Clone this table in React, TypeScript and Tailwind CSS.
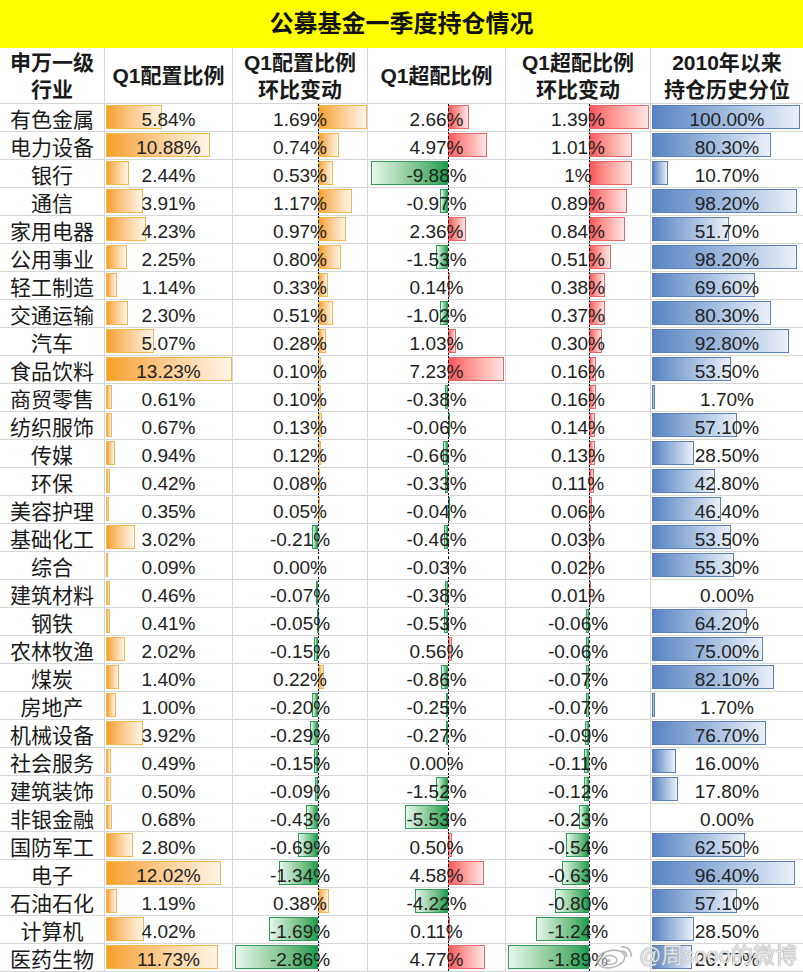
import React from 'react';

// 公募基金一季度持仓情况 — 表格 + 数据条

type Row = [string, string, string, string, string, string];

const ROWS: Row[] = [
  ['有色金属', '5.84%', '1.69%', '2.66%', '1.39%', '100.00%'],
  ['电力设备', '10.88%', '0.74%', '4.97%', '1.01%', '80.30%'],
  ['银行', '2.44%', '0.53%', '-9.88%', '1%', '10.70%'],
  ['通信', '3.91%', '1.17%', '-0.97%', '0.89%', '98.20%'],
  ['家用电器', '4.23%', '0.97%', '2.36%', '0.84%', '51.70%'],
  ['公用事业', '2.25%', '0.80%', '-1.53%', '0.51%', '98.20%'],
  ['轻工制造', '1.14%', '0.33%', '0.14%', '0.38%', '69.60%'],
  ['交通运输', '2.30%', '0.51%', '-1.02%', '0.37%', '80.30%'],
  ['汽车', '5.07%', '0.28%', '1.03%', '0.30%', '92.80%'],
  ['食品饮料', '13.23%', '0.10%', '7.23%', '0.16%', '53.50%'],
  ['商贸零售', '0.61%', '0.10%', '-0.38%', '0.16%', '1.70%'],
  ['纺织服饰', '0.67%', '0.13%', '-0.06%', '0.14%', '57.10%'],
  ['传媒', '0.94%', '0.12%', '-0.66%', '0.13%', '28.50%'],
  ['环保', '0.42%', '0.08%', '-0.33%', '0.11%', '42.80%'],
  ['美容护理', '0.35%', '0.05%', '-0.04%', '0.06%', '46.40%'],
  ['基础化工', '3.02%', '-0.21%', '-0.46%', '0.03%', '53.50%'],
  ['综合', '0.09%', '0.00%', '-0.03%', '0.02%', '55.30%'],
  ['建筑材料', '0.46%', '-0.07%', '-0.38%', '0.01%', '0.00%'],
  ['钢铁', '0.41%', '-0.05%', '-0.53%', '-0.06%', '64.20%'],
  ['农林牧渔', '2.02%', '-0.15%', '0.56%', '-0.06%', '75.00%'],
  ['煤炭', '1.40%', '0.22%', '-0.86%', '-0.07%', '82.10%'],
  ['房地产', '1.00%', '-0.20%', '-0.25%', '-0.07%', '1.70%'],
  ['机械设备', '3.92%', '-0.29%', '-0.27%', '-0.09%', '76.70%'],
  ['社会服务', '0.49%', '-0.15%', '0.00%', '-0.11%', '16.00%'],
  ['建筑装饰', '0.50%', '-0.09%', '-1.52%', '-0.12%', '17.80%'],
  ['非银金融', '0.68%', '-0.43%', '-5.53%', '-0.23%', '0.00%'],
  ['国防军工', '2.80%', '-0.69%', '0.50%', '-0.54%', '62.50%'],
  ['电子', '12.02%', '-1.34%', '4.58%', '-0.63%', '96.40%'],
  ['石油石化', '1.19%', '0.38%', '-4.22%', '-0.80%', '57.10%'],
  ['计算机', '4.02%', '-1.69%', '0.11%', '-1.24%', '28.50%'],
  ['医药生物', '11.73%', '-2.86%', '4.77%', '-1.89%', '26.70%'],
];

const FONT = "font-['Liberation_Sans','Noto_Sans_CJK_SC',sans-serif]";

type Pos = 'orange' | 'red' | 'blue';

function barCls(pos: Pos, neg: boolean) {
  if (neg) return 'border border-[#2f9a5c] bg-linear-to-l from-[#11a04e] to-[#e6f6ec]';
  if (pos === 'orange') return 'border border-[#f4b650] bg-linear-to-r from-[#f5a11c] to-[#fff5e6]';
  if (pos === 'blue') return 'border border-[#5d7fb6] bg-linear-to-r from-[#5784c3] to-[#ebf0f7]';
  return 'border border-[#e7686b] bg-linear-to-r from-[#f7565a] to-[#ffe6e6]';
}

function BarCell({
  value,
  pos,
  axis,
  scale,
  dashed,
  last,
}: {
  value: string;
  pos: Pos;
  axis: number;
  scale: number;
  dashed?: boolean;
  last?: boolean;
}) {
  const v = parseFloat(value);
  const w = Math.abs(v) * scale;
  const neg = v < 0;
  const left = neg ? axis - w : axis;
  return (
    <div
      className={`relative h-7 border-b border-[#d6d6d6] ${last ? '' : 'border-r'} overflow-hidden`}
    >
      {w > 0.3 ? (
        <div
          className={`absolute top-px h-6 ${barCls(pos, neg)}`}
          style={{ left, width: Math.max(w, 2) }}
        />
      ) : null}
      {dashed ? (
        <div
          className="absolute -top-px bottom-[-1px] border-l border-dashed border-black"
          style={{ left: axis }}
        />
      ) : null}
      <div className="relative flex h-full items-center justify-center pt-[3px] text-[19px] leading-none text-[#222]">
        {value}
      </div>
    </div>
  );
}

function WeiboLogo() {
  return (
    <svg width="40" height="26" viewBox="0 0 40 26" className="opacity-75">
      <ellipse cx="16" cy="16" rx="14" ry="8.5" fill="#fff" fillOpacity="0.6" stroke="#a0a0a0" strokeWidth="1.6" transform="rotate(-12 16 16)" />
      <ellipse cx="15" cy="17" rx="7" ry="4.5" fill="none" stroke="#a0a0a0" strokeWidth="1.4" />
      <circle cx="14" cy="17.5" r="1.6" fill="#a0a0a0" />
      <path d="M27 4 a8 8 0 0 1 9 9" fill="none" stroke="#a0a0a0" strokeWidth="1.8" strokeLinecap="round" />
      <path d="M27 8.5 a4 4 0 0 1 4.5 4.5" fill="none" stroke="#a0a0a0" strokeWidth="1.8" strokeLinecap="round" />
    </svg>
  );
}

export default function App() {
  const headCell = 'flex flex-col items-center justify-center border-r border-b border-[#d6d6d6] text-[21px] font-bold leading-[27px] text-[#1a1a1a]';
  return (
    <div className={`relative w-[803px] h-[972px] overflow-hidden bg-white ${FONT}`}>
      <div className="flex h-12 items-center justify-center bg-[#ffff00] text-[24px] font-bold text-[#111]">
        公募基金一季度持仓情况
      </div>
      <div className="grid grid-cols-[105px_128px_135px_138px_145px_152px]">
        <div className={`h-14 ${headCell}`}>
          <span>申万一级</span>
          <span>行业</span>
        </div>
        <div className={`h-14 ${headCell}`}>
          <span>Q1配置比例</span>
        </div>
        <div className={`h-14 ${headCell}`}>
          <span>Q1配置比例</span>
          <span>环比变动</span>
        </div>
        <div className={`h-14 ${headCell}`}>
          <span>Q1超配比例</span>
        </div>
        <div className={`h-14 ${headCell}`}>
          <span>Q1超配比例</span>
          <span>环比变动</span>
        </div>
        <div className={`h-14 ${headCell} border-r-0`}>
          <span>2010年以来</span>
          <span>持仓历史分位</span>
        </div>

        {ROWS.map((r) => (
          <React.Fragment key={r[0]}>
            <div className="flex h-7 items-center justify-center border-r border-b border-[#d6d6d6] pt-[3px] text-[21px] leading-none text-[#1a1a1a]">
              {r[0]}
            </div>
            <BarCell value={r[1]} pos="orange" axis={1} scale={9.55} />
            <BarCell value={r[2]} pos="orange" axis={85} scale={29} dashed />
            <BarCell value={r[3]} pos="red" axis={80} scale={7.8} dashed />
            <BarCell value={r[4]} pos="red" axis={83} scale={43} dashed />
            <BarCell value={r[5]} pos="blue" axis={1} scale={1.48} last />
          </React.Fragment>
        ))}
      </div>

      {/* 水印 */}
      <div className="absolute bottom-[3px] right-[6px] flex items-center gap-1">
        <WeiboLogo />
        <span className="text-[22px] leading-none text-white/75 [text-shadow:0_0_1px_#999,0_0_1px_#999]">
          @周sooo的微博
        </span>
      </div>
    </div>
  );
}
